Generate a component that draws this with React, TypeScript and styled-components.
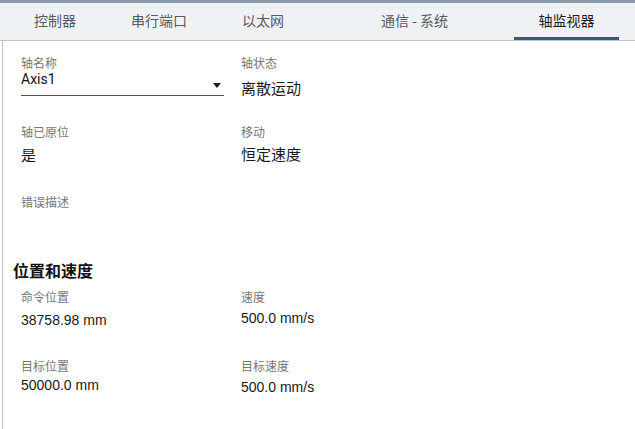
import React from "react";
import styled, { createGlobalStyle } from "styled-components";

const GlobalStyle = createGlobalStyle`
  html, body {
    margin: 0;
    padding: 0;
    background: #ffffff;
  }
  body {
    font-family: "Liberation Sans", "Noto Sans CJK SC", sans-serif;
    width: 635px;
    height: 429px;
    overflow: hidden;
  }
`;

const Page = styled.div`
  display: flex;
  flex-direction: column;
  width: 635px;
  height: 429px;
`;

const TopStrip = styled.div`
  height: 3px;
  background: #8a9aab;
`;

const TabBar = styled.div`
  display: flex;
  height: 37px;
  padding-left: 3px;
  background: #eff2f5;
  border-bottom: 1px solid #c3c6c9;
`;

const Tab = styled.div<{ $w: number; $active?: boolean }>`
  width: ${(p) => p.$w}px;
  box-sizing: border-box;
  padding-top: 7px;
  text-align: center;
  font-family: "Noto Sans CJK SC", sans-serif;
  font-size: 14px;
  line-height: 20px;
  color: ${(p) => (p.$active ? "#1c1c1c" : "#5a5a5a")};
  border-bottom: 3px solid ${(p) => (p.$active ? "#2a5a97" : "transparent")};
  height: 37px;
`;

const Body = styled.div`
  flex: 1;
  margin-left: 2px;
  border-left: 1px solid #bdbdbd;
  padding: 15px 0 0 18px;
`;

const Row = styled.div<{ $mt?: number }>`
  display: grid;
  grid-template-columns: 220px 1fr;
  align-items: start;
  margin-top: ${(p) => p.$mt ?? 0}px;
`;

const Field = styled.div`
  display: flex;
  flex-direction: column;
`;

const Label = styled.div`
  font-family: "Noto Sans CJK SC", sans-serif;
  font-size: 12px;
  line-height: 14px;
  height: 14px;
  color: #767676;
`;

const Value = styled.div<{ $gap: number; $cjk?: boolean }>`
  margin-top: ${(p) => p.$gap}px;
  font-family: ${(p) =>
    p.$cjk ? `"Noto Sans CJK SC", sans-serif` : `"Liberation Sans", "Noto Sans CJK SC", sans-serif`};
  font-size: ${(p) => (p.$cjk ? 15 : 14)}px;
  line-height: 20px;
  height: 20px;
  color: #1a1a1a;
`;

const Select = styled.div`
  display: flex;
  justify-content: space-between;
  width: 203px;
  height: 27px;
  box-sizing: border-box;
  margin-top: -1px;
  border-bottom: 1px solid #555555;
  font-family: Roboto, "Liberation Sans", sans-serif;
  font-size: 14px;
  line-height: 20px;
  color: #111111;
`;

const Arrow = styled.svg`
  margin: 14px 3px 0 0;
`;

const Heading = styled.div`
  margin: 25px 0 0 -8px;
  font-family: "Noto Sans CJK SC", sans-serif;
  font-weight: 700;
  font-size: 16px;
  line-height: 20px;
  color: #111111;
`;

const tabs = [
  { name: "控制器", w: 104 },
  { name: "串行端口", w: 104 },
  { name: "以太网", w: 104 },
  { name: "通信 - 系统", w: 199 },
  { name: "轴监视器", w: 105, active: true },
];

export default function App() {
  return (
    <Page>
      <GlobalStyle />
      <TopStrip />
      <TabBar>
        {tabs.map((t) => (
          <Tab key={t.name} $w={t.w} $active={t.active}>
            {t.name}
          </Tab>
        ))}
      </TabBar>
      <Body>
        <Row>
          <Field>
            <Label>轴名称</Label>
            <Select>
              <span>Axis1</span>
              <Arrow width="8" height="5" viewBox="0 0 8 5">
                <path d="M0 0 L8 0 L4 5 Z" fill="#1a1a1a" />
              </Arrow>
            </Select>
          </Field>
          <Field>
            <Label>轴状态</Label>
            <Value $gap={8} $cjk>离散运动</Value>
          </Field>
        </Row>
        <Row $mt={27}>
          <Field>
            <Label>轴已原位</Label>
            <Value $gap={6} $cjk>是</Value>
          </Field>
          <Field>
            <Label>移动</Label>
            <Value $gap={5} $cjk>恒定速度</Value>
          </Field>
        </Row>
        <Row $mt={30}>
          <Field>
            <Label>错误描述</Label>
            <Value $gap={6}></Value>
          </Field>
        </Row>
        <Heading>位置和速度</Heading>
        <Row $mt={10}>
          <Field>
            <Label>命令位置</Label>
            <Value $gap={6}>38758.98 mm</Value>
          </Field>
          <Field>
            <Label>速度</Label>
            <Value $gap={4}>500.0 mm/s</Value>
          </Field>
        </Row>
        <Row $mt={29}>
          <Field>
            <Label>目标位置</Label>
            <Value $gap={2}>50000.0 mm</Value>
          </Field>
          <Field>
            <Label>目标速度</Label>
            <Value $gap={4}>500.0 mm/s</Value>
          </Field>
        </Row>
      </Body>
    </Page>
  );
}
